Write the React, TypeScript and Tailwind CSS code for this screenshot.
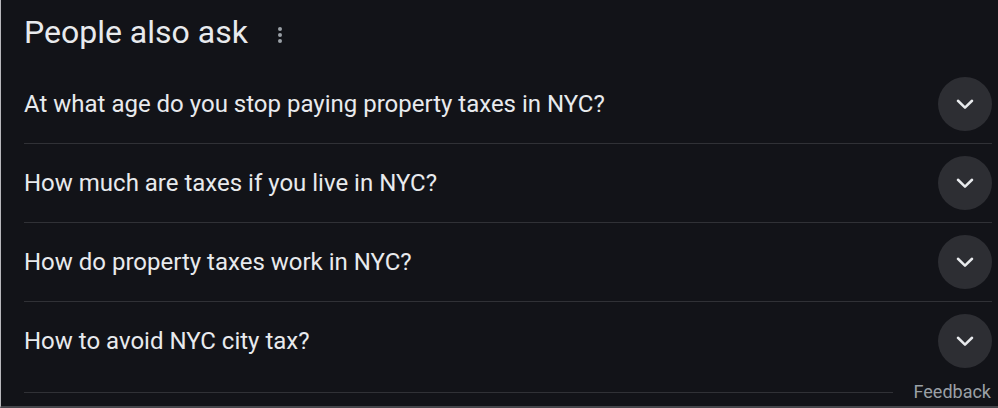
import React from 'react';

const questions = [
  'At what age do you stop paying property taxes in NYC?',
  'How much are taxes if you live in NYC?',
  'How do property taxes work in NYC?',
  'How to avoid NYC city tax?',
];

const Chevron: React.FC = () => (
  <svg width="26" height="26" viewBox="0 0 24 24" fill="none">
    <path d="M5.5 9 12 15.3 18.5 9" stroke="#e8eaed" strokeWidth="2.3" strokeLinecap="round" strokeLinejoin="round" />
  </svg>
);

export default function App() {
  return (
    <div
      className="w-[998px] h-[408px] bg-[#121318] border-l border-l-[#b8b8bc] border-b-2 border-b-[#45464b] overflow-hidden text-[#e8eaed]"
      style={{ fontFamily: 'Roboto, "Liberation Sans", sans-serif' }}
    >
      <div className="pl-[23px] pr-[6px]">
        {/* Header */}
        <div className="h-[65px] flex items-center gap-[29px]">
          <h2 className="text-[32px] leading-none -mt-[1px]">People also ask</h2>
          <svg width="6" height="18" viewBox="0 0 6 18" className="mt-[4px]">
            <circle cx="3" cy="3" r="2" fill="#9aa0a6" />
            <circle cx="3" cy="9" r="2" fill="#9aa0a6" />
            <circle cx="3" cy="15" r="2" fill="#9aa0a6" />
          </svg>
        </div>

        {/* Questions */}
        {questions.map((q, i) => (
          <div
            key={q}
            className={`flex items-center justify-between ${i === questions.length - 1 ? 'h-[76px] pt-[1px]' : 'h-[79px] border-b border-[#303136]'}`}
          >
            <span className="text-[24px] leading-none">{q}</span>
            <div className="w-[54px] h-[54px] rounded-full bg-[#2d2e33] flex items-center justify-center">
              <Chevron />
            </div>
          </div>
        ))}

        {/* Footer */}
        <div className="h-[28px] flex items-center gap-[21px] pr-[1px]">
          <div className="flex-1 border-t border-[#303136]" />
          <span className="text-[18px] text-[#9aa0a6] leading-none">Feedback</span>
        </div>
      </div>
    </div>
  );
}
